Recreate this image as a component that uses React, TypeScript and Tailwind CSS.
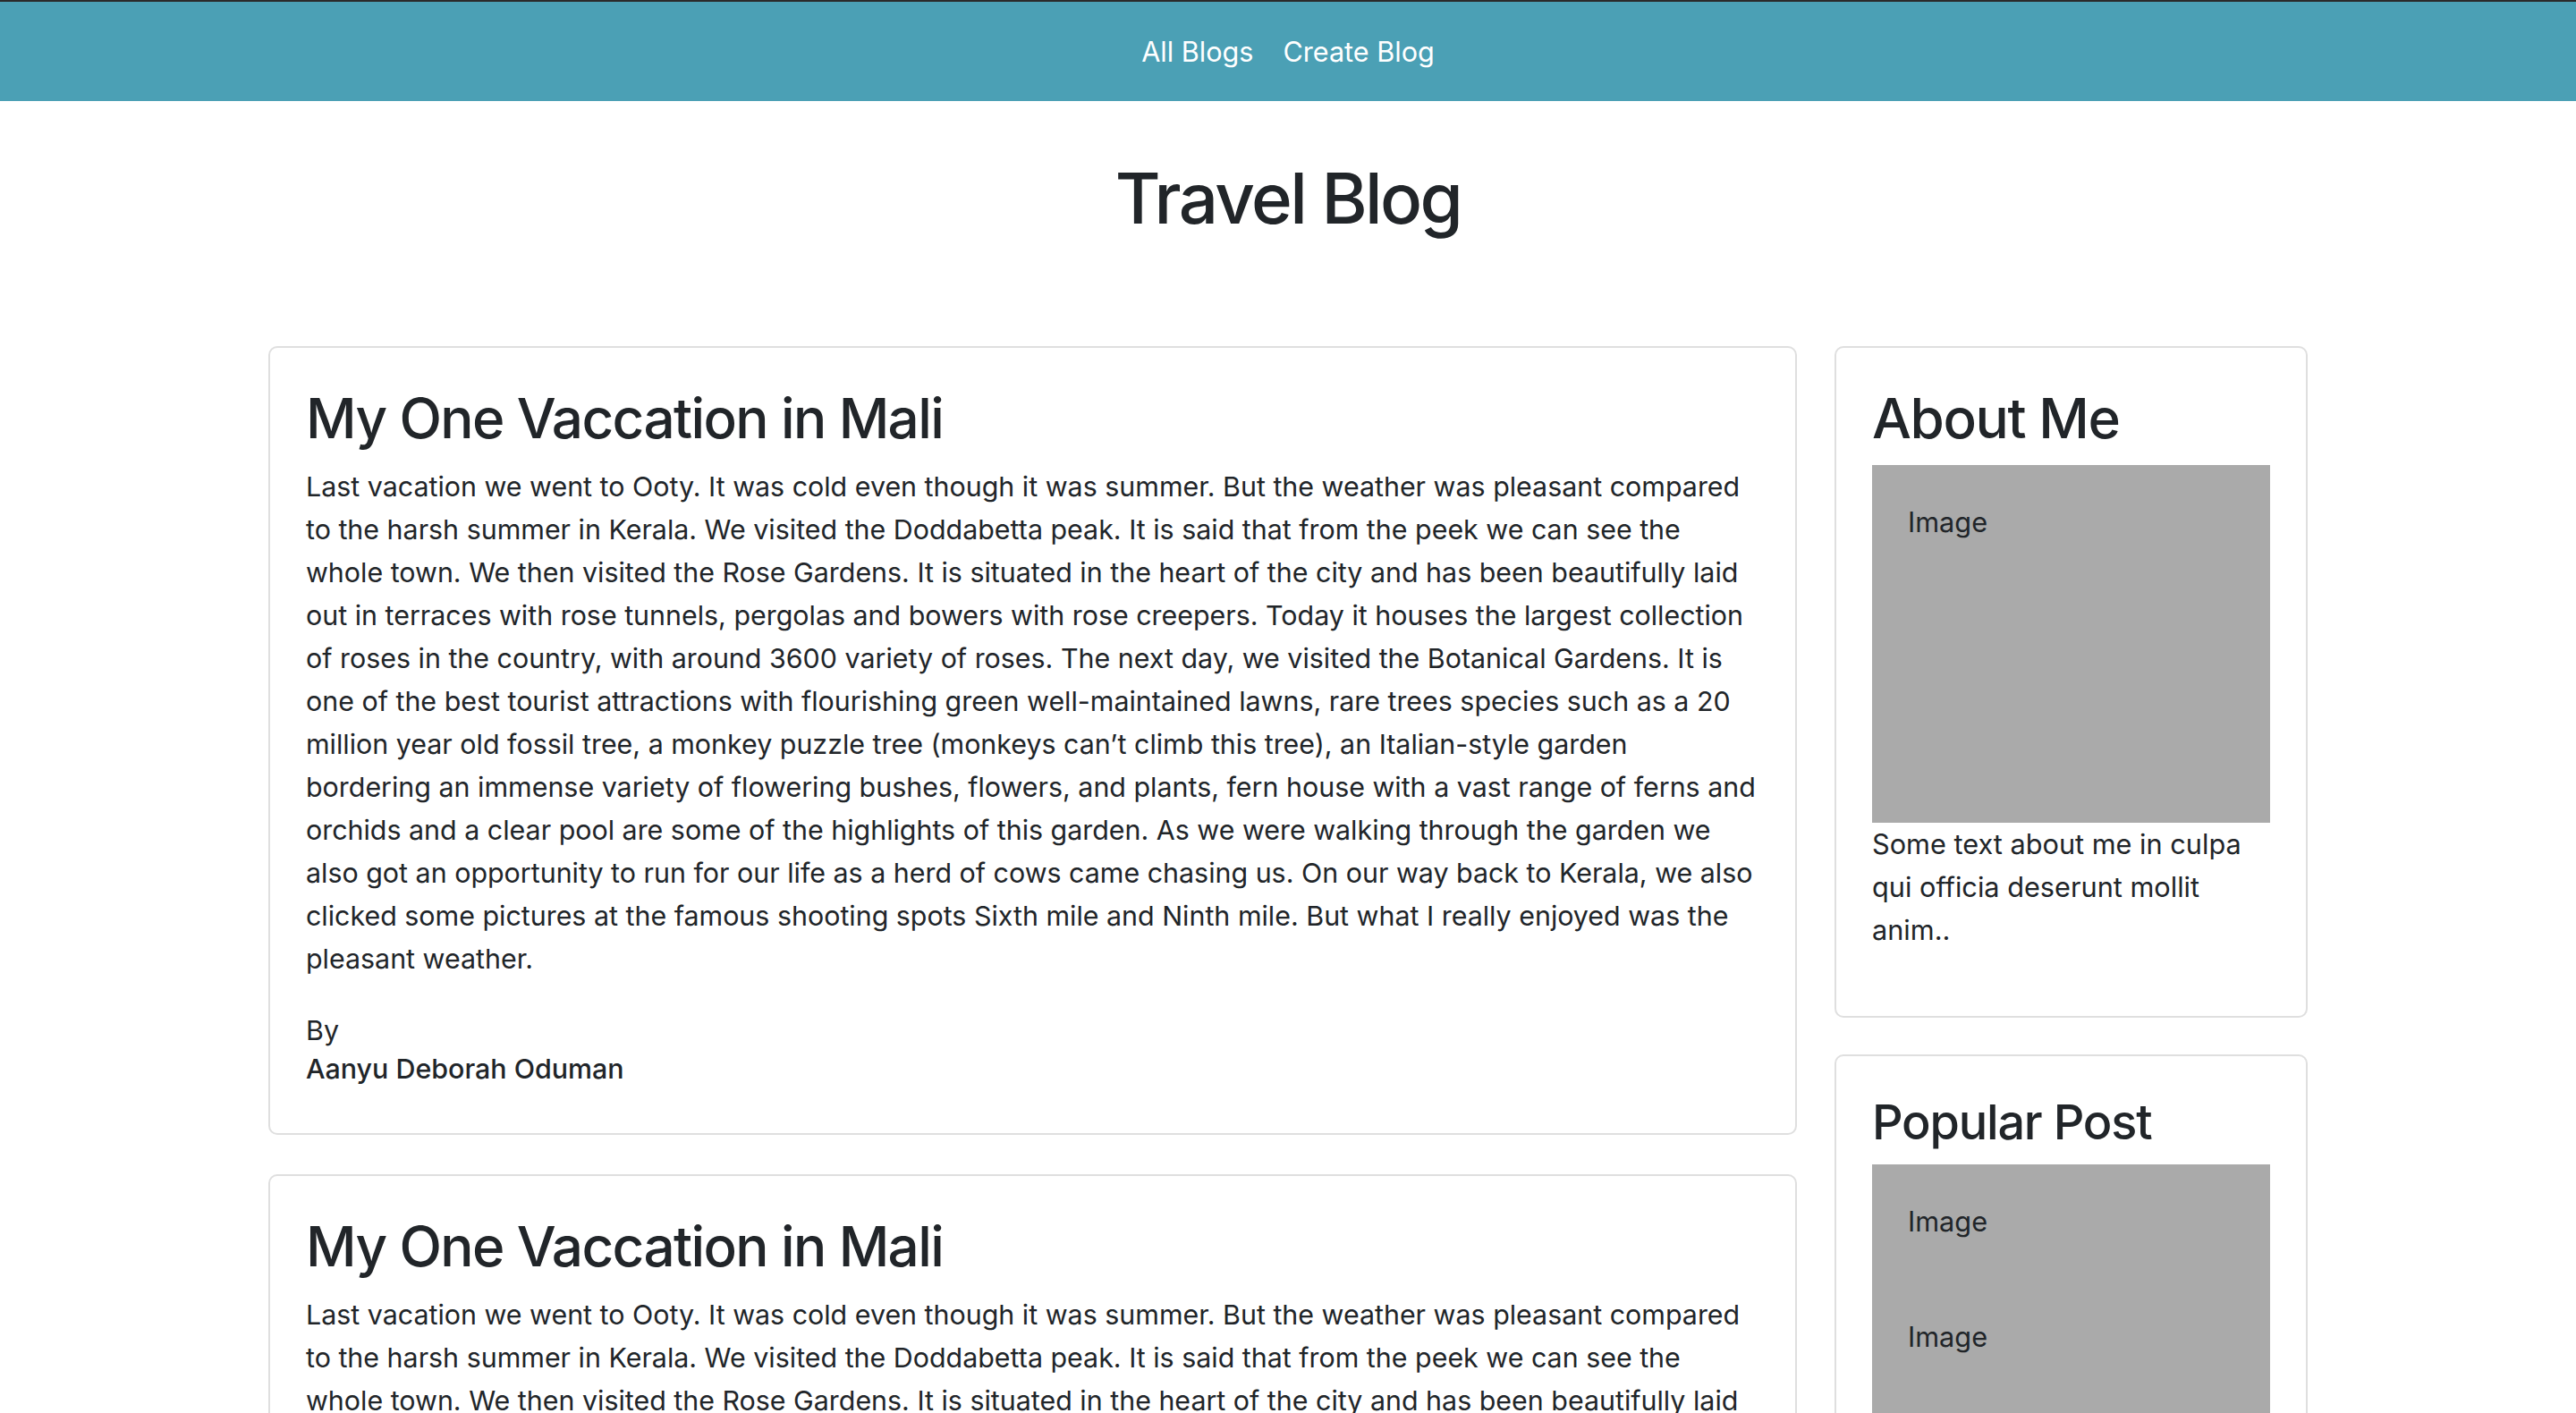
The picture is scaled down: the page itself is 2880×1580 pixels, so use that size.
import React from 'react';

const story =
  'Last vacation we went to Ooty. It was cold even though it was summer. But the weather was pleasant compared to the harsh summer in Kerala. We visited the Doddabetta peak. It is said that from the peek we can see the whole town. We then visited the Rose Gardens. It is situated in the heart of the city and has been beautifully laid out in terraces with rose tunnels, pergolas and bowers with rose creepers. Today it houses the largest collection of roses in the country, with around 3600 variety of roses. The next day, we visited the Botanical Gardens. It is one of the best tourist attractions with flourishing green well-maintained lawns, rare trees species such as a 20 million year old fossil tree, a monkey puzzle tree (monkeys can\u2019t climb this tree), an Italian-style garden bordering an immense variety of flowering bushes, flowers, and plants, fern house with a vast range of ferns and orchids and a clear pool are some of the highlights of this garden. As we were walking through the garden we also got an opportunity to run for our life as a herd of cows came chasing us. On our way back to Kerala, we also clicked some pictures at the famous shooting spots Sixth mile and Ninth mile. But what I really enjoyed was the pleasant weather.';

function PostCard() {
  return (
    <div className="border-2 border-[#dfdfdf] rounded-[10px] p-[40px] bg-white">
      <h2 className="text-[62px] leading-[77px] font-medium tracking-[-1.6px] mb-[14px]">My One Vaccation in Mali</h2>
      <p className="text-[30.4px] leading-[48px] mb-[35px]">{story}</p>
      <p className="text-[30.4px] leading-[43px]">By</p>
      <p className="text-[30.4px] leading-[43px] font-medium mb-[10px]">Aanyu Deborah Oduman</p>
    </div>
  );
}

function FakeImg({ h }: { h: string }) {
  return (
    <div className={`bg-[#aaaaaa] px-[40px] pt-[40px] ${h}`}>
      <p className="text-[30.7px] leading-[48px]">Image</p>
    </div>
  );
}

export default function App() {
  return (
    <div className="min-h-screen bg-white text-[#212529] font-['Inter',sans-serif]">
      <nav className="border-t-2 border-[#2b2b2b] bg-[#4ba0b5] h-[113px] flex items-center justify-center gap-[33px] text-white text-[30.6px]">
        <a className="leading-[48px]">All Blogs</a>
        <a className="leading-[48px]">Create Blog</a>
      </nav>

      <h1 className="text-center text-[78px] leading-[96px] font-medium tracking-[-2.6px] mt-[61px]">Travel Blog</h1>

      <div className="w-[2280px] mx-auto mt-[117px] flex">
        <div className="w-[1709px] flex flex-col gap-[44px]">
          <PostCard />
          <PostCard />
        </div>
        <div className="flex-1 pl-[42px] flex flex-col gap-[41px]">
          <div className="border-2 border-[#dfdfdf] rounded-[10px] p-[40px]">
            <h2 className="text-[62px] leading-[77px] font-medium tracking-[-1.4px] mb-[14px]">About Me</h2>
            <FakeImg h="h-[400px]" />
            <p className="text-[30.7px] leading-[48px] mb-[32px]">
              Some text about me in culpa qui officia deserunt mollit anim..
            </p>
          </div>
          <div className="border-2 border-[#dfdfdf] rounded-[10px] p-[40px]">
            <h3 className="text-[54px] leading-[67px] font-medium tracking-[-1.2px] mb-[14px]">Popular Post</h3>
            <FakeImg h="h-[129px]" />
            <FakeImg h="h-[129px]" />
            <FakeImg h="h-[129px]" />
          </div>
        </div>
      </div>
      <div className="h-[60px]" />
    </div>
  );
}
